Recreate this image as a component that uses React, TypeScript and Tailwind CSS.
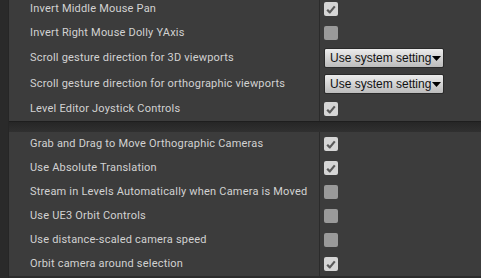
import React from "react";

type Row =
    | { label: string; kind: "check"; checked: boolean }
    | { label: string; kind: "combo"; value: string };

const sectionA: Row[] = [
    { label: "Invert Middle Mouse Pan", kind: "check", checked: true },
    { label: "Invert Right Mouse Dolly YAxis", kind: "check", checked: false },
    { label: "Scroll gesture direction for 3D viewports", kind: "combo", value: "Use system setting" },
    { label: "Scroll gesture direction for orthographic viewports", kind: "combo", value: "Use system setting" },
    { label: "Level Editor Joystick Controls", kind: "check", checked: true },
];

const sectionB: Row[] = [
    { label: "Grab and Drag to Move Orthographic Cameras", kind: "check", checked: true },
    { label: "Use Absolute Translation", kind: "check", checked: true },
    { label: "Stream in Levels Automatically when Camera is Moved", kind: "check", checked: false },
    { label: "Use UE3 Orbit Controls", kind: "check", checked: false },
    { label: "Use distance-scaled camera speed", kind: "check", checked: false },
    { label: "Orbit camera around selection", kind: "check", checked: true },
];

function CheckBox({ checked }: { checked: boolean }) {
    return (
        <div
            className={`w-[14px] h-[14px] rounded-[2px] flex items-center justify-center ${checked ? "bg-[#d6d6d6]" : "bg-[#9a9a9a]"}`}
        >
            {checked && (
                <svg width="10" height="9" viewBox="0 0 10 9">
                    <path d="M1.2 4.8 L3.8 7.4 L8.8 1.4" fill="none" stroke="#5a5a5a" strokeWidth="2.2" strokeLinejoin="round" />
                </svg>
            )}
        </div>
    );
}

function Combo({ value }: { value: string }) {
    return (
        <div className="w-[120px] h-[20px] shrink-0 flex items-center pl-[5px] rounded-[2px] border border-[#2a2a2a] bg-gradient-to-b from-[#ececec] to-[#bcbcbc] text-[#111] text-[12px] leading-none whitespace-nowrap font-['Liberation_Sans',sans-serif]">
            <span>{value}</span>
            <svg width="9" height="5" viewBox="0 0 9 5" className="ml-[1px] mt-[1px] shrink-0">
                <path d="M0 0 L9 0 L4.5 5 Z" fill="#000" />
            </svg>
        </div>
    );
}

function SettingRow({ row }: { row: Row }) {
    const h = row.kind === "combo" ? "h-[26px]" : "h-[24px]";
    return (
        <div className={`flex ${h}`}>
            <div className="w-[311px] shrink-0 flex items-center pl-[21px] border-r border-[#2b2b2b] text-[#d2d2d2] text-[11px] tracking-[0.2px] whitespace-nowrap overflow-hidden">
                {row.label}
            </div>
            <div className="flex-1 flex items-center pl-[4px]">
                {row.kind === "check" ? <CheckBox checked={row.checked} /> : <Combo value={row.value} />}
            </div>
        </div>
    );
}

export default function App() {
    return (
        <div className="w-[481px] h-[278px] overflow-hidden bg-[#2c2c2c] font-['Roboto',sans-serif] flex">
            {/* left gutter */}
            <div className="w-[9px] shrink-0 bg-[#2a2a2a] border-r border-[#262626]" />
            <div className="flex-1 flex flex-col -mt-[3px]">
                <div className="bg-[#3c3c3c]">
                    {sectionA.map((r) => (
                        <SettingRow key={r.label} row={r} />
                    ))}
                </div>
                {/* category gap */}
                <div className="h-[11px] shrink-0 border-t border-[#1e1e1e] bg-gradient-to-b from-[#262626] to-[#303030]" />
                <div className="bg-[#3c3c3c]">
                    {sectionB.map((r) => (
                        <SettingRow key={r.label} row={r} />
                    ))}
                </div>
            </div>
        </div>
    );
}
